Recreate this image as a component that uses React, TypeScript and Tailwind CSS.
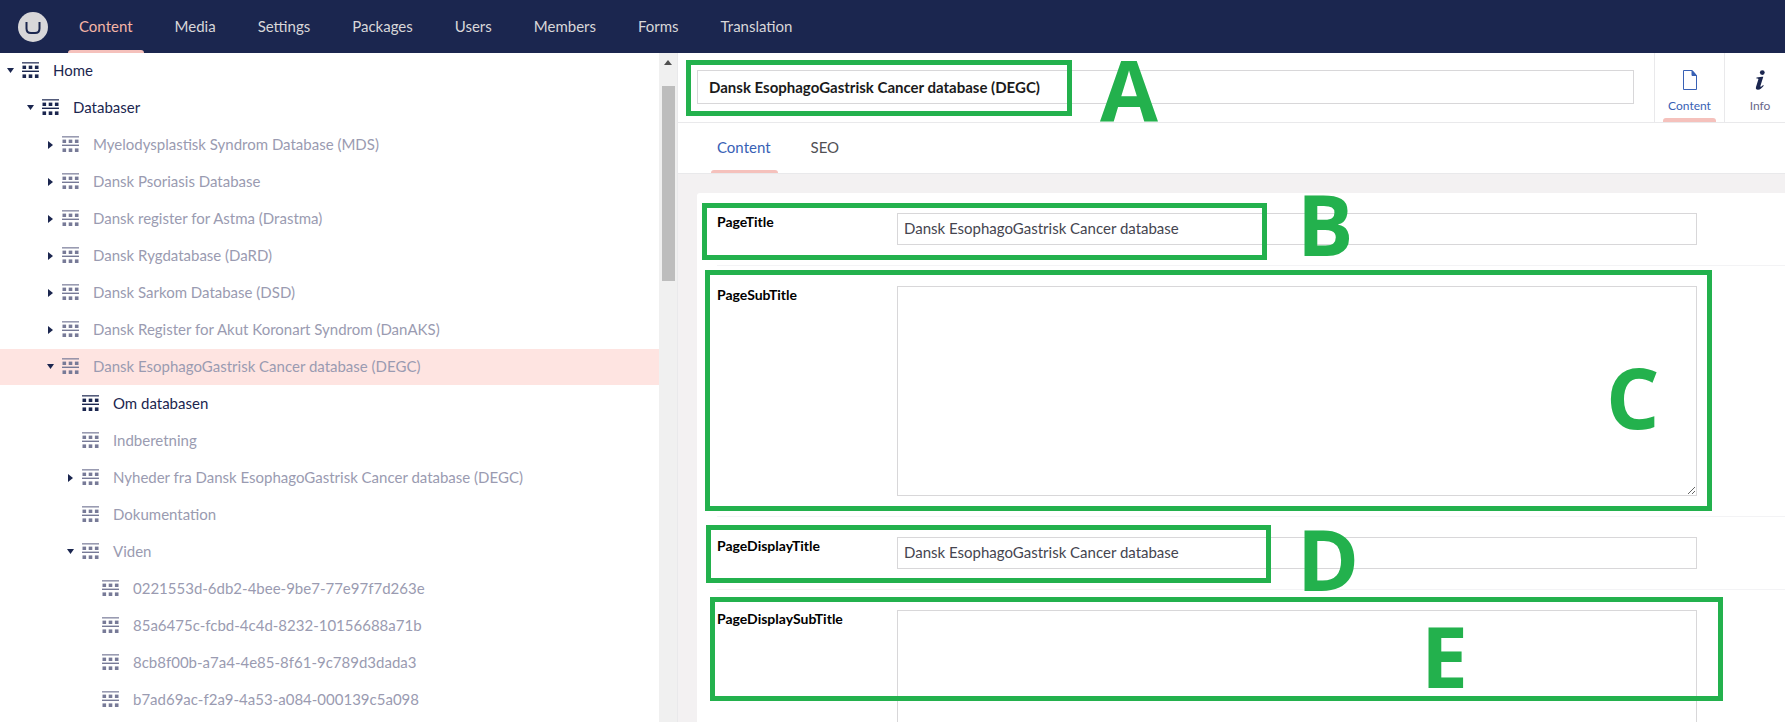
const navItems = ['Content', 'Media', 'Settings', 'Packages', 'Users', 'Members', 'Forms', 'Translation'];

type TreeRow = {
  label: string;
  level: number;
  caret?: 'down' | 'right';
  dim?: boolean;
  selected?: boolean;
};

const treeRows: TreeRow[] = [
  { label: 'Home', level: 0, caret: 'down' },
  { label: 'Databaser', level: 1, caret: 'down' },
  { label: 'Myelodysplastisk Syndrom Database (MDS)', level: 2, caret: 'right', dim: true },
  { label: 'Dansk Psoriasis Database', level: 2, caret: 'right', dim: true },
  { label: 'Dansk register for Astma (Drastma)', level: 2, caret: 'right', dim: true },
  { label: 'Dansk Rygdatabase (DaRD)', level: 2, caret: 'right', dim: true },
  { label: 'Dansk Sarkom Database (DSD)', level: 2, caret: 'right', dim: true },
  { label: 'Dansk Register for Akut Koronart Syndrom (DanAKS)', level: 2, caret: 'right', dim: true },
  { label: 'Dansk EsophagoGastrisk Cancer database (DEGC)', level: 2, caret: 'down', dim: true, selected: true },
  { label: 'Om databasen', level: 3 },
  { label: 'Indberetning', level: 3, dim: true },
  { label: 'Nyheder fra Dansk EsophagoGastrisk Cancer database (DEGC)', level: 3, caret: 'right', dim: true },
  { label: 'Dokumentation', level: 3, dim: true },
  { label: 'Viden', level: 3, caret: 'down', dim: true },
  { label: '0221553d-6db2-4bee-9be7-77e97f7d263e', level: 4, dim: true },
  { label: '85a6475c-fcbd-4c4d-8232-10156688a71b', level: 4, dim: true },
  { label: '8cb8f00b-a7a4-4e85-8f61-9c789d3dada3', level: 4, dim: true },
  { label: 'b7ad69ac-f2a9-4a53-a084-000139c5a098', level: 4, dim: true },
];

const levelPadding = ['pl-[7px]', 'pl-[27px]', 'pl-[47px]', 'pl-[67px]', 'pl-[87px]'];

const boxes = [
  'left-[686px] top-[60px] w-[386px] h-[56px]',
  'left-[702px] top-[203px] w-[565px] h-[57px]',
  'left-[705px] top-[270px] w-[1007px] h-[241px]',
  'left-[706px] top-[525px] w-[565px] h-[58px]',
  'left-[710px] top-[597px] w-[1013px] h-[104px]',
];

const letters = [
  { text: 'A', pos: 'left-[1100px] top-[47px]' },
  { text: 'B', pos: 'left-[1297px] top-[182px]' },
  { text: 'C', pos: 'left-[1606px] top-[355px]' },
  { text: 'D', pos: 'left-[1297px] top-[517px]' },
  { text: 'E', pos: 'left-[1421px] top-[614px]' },
];

const NodeIcon = ({ className }: { className: string }) => (
  <svg viewBox="0 0 17 17" className={`w-[17px] h-[17px] shrink-0 ${className}`} fill="currentColor">
    <rect x="0" y="0" width="17" height="1.6" opacity="0.75" />
    <rect x="0.5" y="3.6" width="3.6" height="3.4" />
    <rect x="6.7" y="3.6" width="3.6" height="3.4" />
    <rect x="12.9" y="3.6" width="3.6" height="3.4" />
    <rect x="0" y="8.6" width="17" height="1.4" />
    <rect x="0.5" y="12.4" width="3.6" height="3.6" />
    <rect x="6.7" y="12.4" width="3.6" height="3.6" />
    <rect x="12.9" y="12.4" width="3.6" height="3.6" />
  </svg>
);

const Caret = ({ dir }: { dir?: 'down' | 'right' }) => (
  <span className="w-[15px] shrink-0 flex">
    {dir === 'down' && (
      <svg viewBox="0 0 7 5" className="w-[7px] h-[5px] text-[#1b264f]" fill="currentColor">
        <path d="M0 0h7L3.500 5z" />
      </svg>
    )}
    {dir === 'right' && (
      <svg viewBox="0 0 5 8" className="w-[5px] h-[8px] ml-[1px] text-[#1b264f]" fill="currentColor">
        <path d="M0 0l5 4-5 4z" />
      </svg>
    )}
  </span>
);

const Field = ({ label, value, textarea }: { label: string; value?: string; textarea?: boolean }) => (
  <div className="flex border-b border-[#f3f3f5] py-5 shrink-0">
    <label className="w-[180px] shrink-0 text-[14px] leading-[18px] font-bold text-black">{label}</label>
    {textarea ? (
      <textarea readOnly className="block w-[800px] h-[210px] shrink-0 border border-[#d8d7d9] outline-none resize-y" />
    ) : (
      <input
        readOnly
        value={value}
        className="block w-[800px] h-[32px] shrink-0 border border-[#d8d7d9] px-[6px] pb-[2px] text-[15px] text-[#45454f] outline-none"
      />
    )}
  </div>
);

export default function App() {
  return (
    <div className="relative w-[1785px] h-[722px] overflow-hidden flex flex-col bg-white font-['Lato',sans-serif]">
      <header className="h-[53px] shrink-0 flex items-center bg-[#1b264f]">
        <div className="w-[58px] shrink-0 flex justify-center pl-[8px]">
          <svg viewBox="0 0 30 30" className="w-[30px] h-[30px]">
            <circle cx="15" cy="15" r="15" fill="#d8d7d9" />
            <path d="M8.500 10v6.500c0 3 2 4.500 4.500 4.500h4c2.500 0 4.500-1.500 4.500-4.500V10" fill="none" stroke="#1b264f" strokeWidth="2" />
          </svg>
        </div>
        <nav className="flex h-full">
          {navItems.map((item, i) => (
            <div
              key={item}
              className={`relative h-full px-[21px] flex items-center text-[15px] ${i === 0 ? 'text-[#f5b5a6]' : 'text-[#d8d7d9]'}`}
            >
              {item}
              {i === 0 && <span className="absolute bottom-0 left-[10px] right-[10px] h-[3px] rounded-t-[3px] bg-[#f5c1bc]" />}
            </div>
          ))}
        </nav>
      </header>

      <div className="flex flex-1 min-h-0">
        <aside className="w-[659px] shrink-0 overflow-hidden">
          {treeRows.map((row) => (
            <div
              key={row.label}
              className={`h-[37px] pb-[2px] flex items-center ${levelPadding[row.level]} text-[15px] ${row.selected ? 'bg-[linear-gradient(#fee4e1_36px,#ffffff_36px)]' : ''} ${row.dim ? 'text-[#9a9bb1]' : 'text-[#1b264f]'}`}
            >
              <Caret dir={row.caret} />
              <NodeIcon className={row.dim ? 'text-[#777a97]' : 'text-[#1b264f]'} />
              <span className="ml-[14px] whitespace-nowrap">{row.label}</span>
            </div>
          ))}
        </aside>

        <div className="w-[18px] shrink-0 bg-[#f0f0f0] flex flex-col items-center">
          <svg viewBox="0 0 8 5" className="w-[8px] h-[5px] mt-[7px] text-[#505050]" fill="currentColor">
            <path d="M4 0l4 5H0z" />
          </svg>
          <div className="w-[13px] h-[195px] mt-[21px] bg-[#bdbdbd]" />
        </div>

        <main className="flex-1 min-w-0 flex flex-col border-l border-[#e9e9eb]">
          <div className="h-[70px] shrink-0 flex border-b border-[#e9e9eb]">
            <div className="flex-1 flex items-center pl-[19px] pr-[20px] pb-[1px]">
              <input
                readOnly
                value="Dansk EsophagoGastrisk Cancer database (DEGC)"
                className="block w-full h-[34px] border border-[#d8d7d9] px-[11px] text-[15px] font-bold text-[#1b1b1b] outline-none"
              />
            </div>
            <div className="relative w-[70px] shrink-0 flex flex-col items-center border-l border-[#e9e9eb] pt-[17px] text-[12px] text-[#3861b5]">
              <svg viewBox="0 0 14 20" className="w-[14px] h-[20px]" fill="none" stroke="currentColor">
                <path d="M.5.500h8.500l4.500 5v14H.5z" />
                <path d="M9 .5v5h4.500z" fill="currentColor" />
              </svg>
              <span className="mt-[8px] leading-[15px]">Content</span>
              <span className="absolute bottom-0 left-[8px] right-[8px] h-[4px] rounded-t-[3px] bg-[#f5c1bc]" />
            </div>
            <div className="w-[61px] shrink-0 flex flex-col items-center border-l border-[#e9e9eb] pl-[10px] pt-[17px] text-[12px] text-[#68688a]">
              <svg viewBox="0 0 12 20" className="w-[12px] h-[20px] text-[#1b264f]" fill="currentColor">
                <circle cx="8.300" cy="2.600" r="2.400" />
                <path d="M2.500 7.500l5.600-.8h1.200L6.400 16c-.2.700.3 1 1 .5l1.800-1.400.5.600C8 18 6.300 19.700 3.900 19.700c-1.700 0-2.400-1-1.900-2.700l2.400-7.700c.2-.6-.3-.8-2-.9z" />
              </svg>
              <span className="mt-[8px] leading-[15px]">Info</span>
            </div>
          </div>

          <div className="h-[51px] shrink-0 flex pl-[39px] gap-[40px] border-b border-[#e9e9eb] text-[15px]">
            <div className="relative flex items-center h-full pb-[2px] text-[#3861b5]">
              Content
              <span className="absolute bottom-0 -left-[6px] -right-[7px] h-[3px] rounded-t-[3px] bg-[#f5c1bc]" />
            </div>
            <div className="flex items-center h-full pb-[2px] text-[#515054]">SEO</div>
          </div>

          <div className="flex-1 min-h-0 bg-[#f3f1f2] pl-[19px] pt-[19px] overflow-hidden">
            <div className="h-full bg-white pl-[20px] flex flex-col rounded-tl-[3px] overflow-hidden">
              <Field label="PageTitle" value="Dansk EsophagoGastrisk Cancer database" />
              <Field label="PageSubTitle" textarea />
              <Field label="PageDisplayTitle" value="Dansk EsophagoGastrisk Cancer database" />
              <Field label="PageDisplaySubTitle" textarea />
            </div>
          </div>
        </main>
      </div>

      {boxes.map((pos) => (
        <div key={pos} className={`absolute ${pos} border-[5px] border-[#23b14d] pointer-events-none`} />
      ))}
      {letters.map((l) => (
        <span key={l.text} className={`absolute ${l.pos} font-['Open_Sans',sans-serif] font-bold text-[84px] leading-none text-[#23b14d]`}>
          {l.text}
        </span>
      ))}
    </div>
  );
}
